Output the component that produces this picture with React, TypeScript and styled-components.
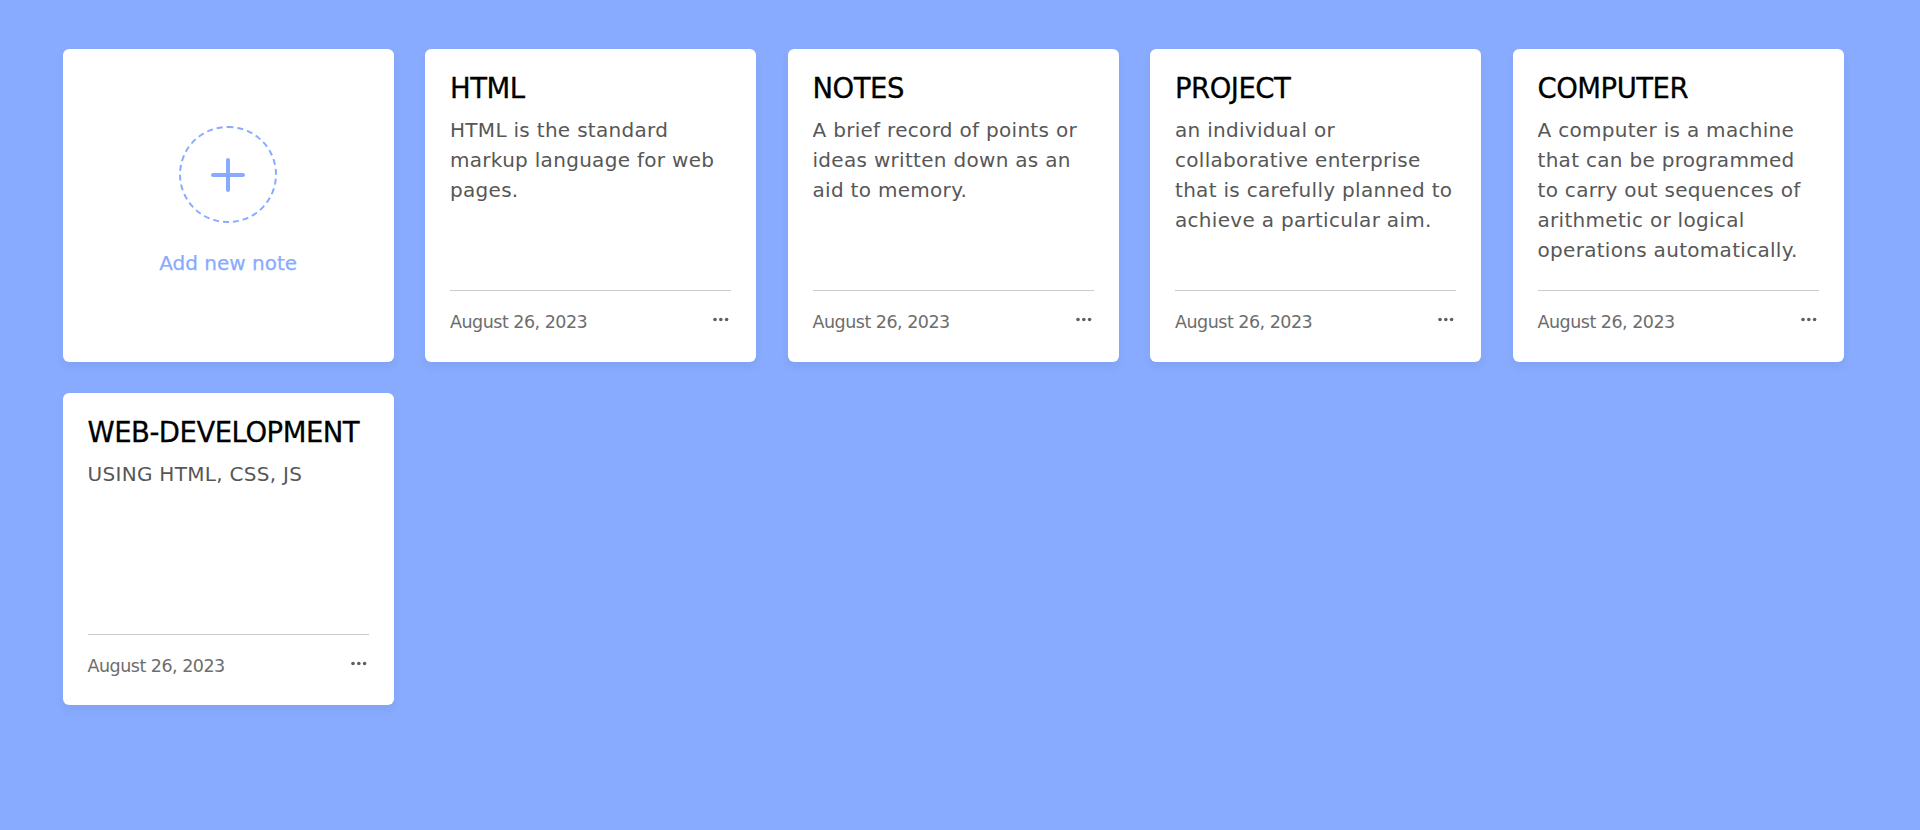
import React from "react";
import styled, { createGlobalStyle } from "styled-components";

const GlobalStyle = createGlobalStyle`
  * { box-sizing: border-box; margin: 0; padding: 0; }
  html, body { background: #88abff; }
  body {
    margin: 0;
    font-family: "DejaVu Sans", "Liberation Sans", sans-serif;
  }
`;

const Page = styled.main`
  padding: 49px 62.5px;
`;

const Wrapper = styled.ul`
  display: grid;
  gap: 31.25px;
  grid-template-columns: repeat(auto-fill, 331.25px);
  list-style: none;
`;

const Card = styled.li`
  height: 312.5px;
  list-style: none;
  border-radius: 6.25px;
  padding: 18.75px 25px 25px;
  background: #fff;
  box-shadow: 0 5px 10px rgba(0, 0, 0, 0.05);
  display: flex;
  flex-direction: column;
  justify-content: space-between;
`;

const AddCard = styled(Card)`
  align-items: center;
  justify-content: center;
  cursor: pointer;
`;

const AddIcon = styled.div`
  height: 97.5px;
  width: 97.5px;
  border-radius: 50%;
  border: 2.5px dashed #88abff;
  display: flex;
  align-items: center;
  justify-content: center;
`;

const AddLabel = styled.p`
  color: #88abff;
  font-size: 20px;
  line-height: 30px;
  font-weight: 500;
  margin-top: 25px;
  -webkit-text-stroke: 0.25px #88abff;
`;

const Details = styled.div`
  max-height: 206px;
  overflow: hidden;
`;

const Title = styled.p`
  font-size: 27.5px;
  line-height: 41.25px;
  font-weight: 500;
  color: #000;
  letter-spacing: -0.5px;
  -webkit-text-stroke: 0.3px #000;
`;

const Desc = styled.span`
  display: block;
  color: #575757;
  font-size: 20px;
  line-height: 30px;
  margin-top: 6.25px;
  letter-spacing: 0.3px;
`;

const Bottom = styled.div`
  display: flex;
  align-items: center;
  justify-content: space-between;
  padding-top: 12.5px;
  border-top: 1px solid #ccc;
`;

const DateText = styled.span`
  color: #6d6d6d;
  font-size: 17.5px;
  line-height: 26.25px;
  letter-spacing: -0.5px;
  padding-top: 4px;
`;

const Settings = styled.div`
  height: 32.7px;
  display: flex;
  align-items: center;
  padding-right: 2px;
  padding-bottom: 1px;
  cursor: pointer;
`;

const PlusIcon = () => (
  <svg width="36" height="36" viewBox="0 0 36 36" fill="none">
    <path
      d="M18 3v30M3 18h30"
      stroke="#88abff"
      strokeWidth="4"
      strokeLinecap="round"
    />
  </svg>
);

const DotsIcon = () => (
  <svg width="16" height="5" viewBox="0 0 16 5" fill="#5f5f5f">
    <circle cx="2" cy="2.5" r="1.8" />
    <circle cx="7.8" cy="2.5" r="1.8" />
    <circle cx="13.6" cy="2.5" r="1.8" />
  </svg>
);

const notes = [
  {
    title: "HTML",
    desc: "HTML is the standard markup language for web pages.",
  },
  {
    title: "NOTES",
    desc: "A brief record of points or ideas written down as an aid to memory.",
  },
  {
    title: "PROJECT",
    desc: "an individual or collaborative enterprise that is carefully planned to achieve a particular aim.",
  },
  {
    title: "COMPUTER",
    desc: "A computer is a machine that can be programmed to carry out sequences of arithmetic or logical operations automatically.",
  },
  {
    title: "WEB-DEVELOPMENT",
    desc: "USING HTML, CSS, JS",
  },
];

export default function App() {
  return (
    <>
      <GlobalStyle />
      <Page>
        <Wrapper>
          <AddCard>
            <AddIcon>
              <PlusIcon />
            </AddIcon>
            <AddLabel>Add new note</AddLabel>
          </AddCard>
          {notes.map((n) => (
            <Card key={n.title}>
              <Details>
                <Title>{n.title}</Title>
                <Desc>{n.desc}</Desc>
              </Details>
              <Bottom>
                <DateText>August 26, 2023</DateText>
                <Settings>
                  <DotsIcon />
                </Settings>
              </Bottom>
            </Card>
          ))}
        </Wrapper>
      </Page>
    </>
  );
}
